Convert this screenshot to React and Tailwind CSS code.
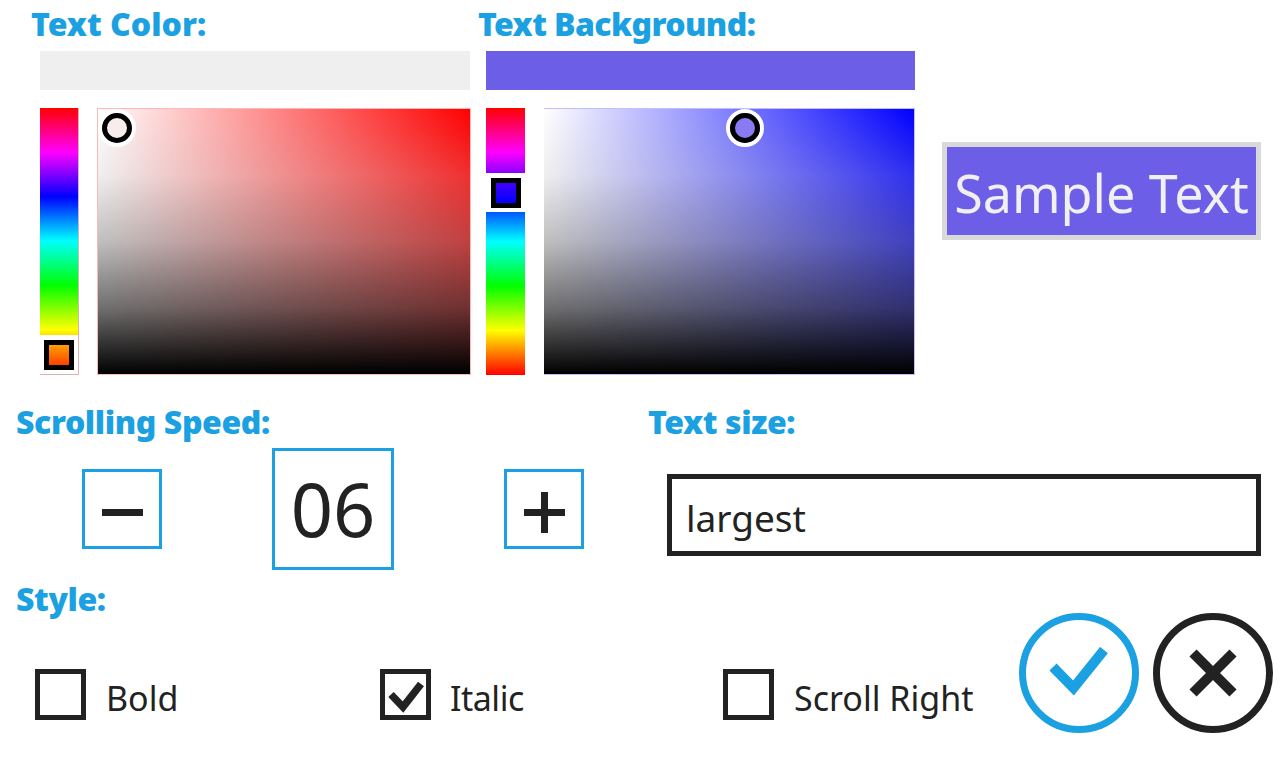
const HUE = "bg-[linear-gradient(to_bottom,#ff0000_0%,#ff00ff_16.67%,#0000ff_33.33%,#00ffff_50%,#00ff00_66.67%,#ffff00_83.33%,#ff0000_100%)]";

function Heading({ children, className = "tracking-[-0.4px]" }) {
  return <div className={`text-[#1ba1e2] text-[32px] leading-[38px] font-black whitespace-nowrap ${className}`}>{children}</div>;
}

function HueSlider({ className, top, inner }) {
  return (
    <div className={`relative w-[39px] h-[267px] ${HUE} ${className}`}>
      <div style={{ top }} className="absolute left-0 w-full h-[39px] bg-white flex items-center justify-center">
        <div className={`w-[30px] h-[30px] border-[5px] border-black ${inner}`} />
      </div>
    </div>
  );
}

function SatBox({ className, x, y, fill }) {
  return (
    <div className={`relative h-[267px] ${className}`}>
      <div style={{ left: x, top: y, background: fill }} className="absolute w-[38px] h-[38px] rounded-full border-[4px] border-white flex items-center justify-center">
        <div style={{ background: fill }} className="w-[30px] h-[30px] shrink-0 rounded-full border-[5px] border-black" />
      </div>
    </div>
  );
}

function SquareButton({ children, className = "" }) {
  return <div className={`border-[3px] border-[#1ba1e2] flex items-center justify-center text-[#222] bg-white ${className}`}>{children}</div>;
}

function Check({ checked, label, className = "", gap = "ml-[20px]" }) {
  return (
    <div className={`flex items-start ${className}`}>
      <div className="w-[51px] h-[51px] border-[5px] border-[#222] flex items-center justify-center">
        {checked && (
          <svg width="41" height="41" viewBox="0 0 41 41">
            <path d="M6 20.5 L18 33 L36 10" fill="none" stroke="#222" strokeWidth="7.5" />
          </svg>
        )}
      </div>
      <span className={`${gap} text-[34px] leading-[58px] text-[#222] font-normal`}>{label}</span>
    </div>
  );
}

export default function App() {
  return (
    <div className="w-[1280px] h-[768px] bg-white overflow-hidden flex flex-col font-['Noto_Sans','Open_Sans',sans-serif]">
      <div className="flex h-[403px] items-start">
        <div className="ml-[31px] w-[440px] pt-[5px]">
          <Heading className="tracking-[0px]">Text Color:</Heading>
          <div className="ml-[9px] mr-[1px] mt-[8px] h-[39px] bg-[#efefef]" />
          <div className="ml-[9px] mt-[18px] flex">
            <HueSlider className="border-r border-b border-[#e0b0b0]" top="227px" inner="bg-[linear-gradient(to_bottom,#ffa000,#ff4000)]" />
            <SatBox
              className="ml-[18px] w-[374px] border border-[#ffb8b8] bg-[linear-gradient(to_bottom,rgba(255,255,255,0),rgba(191,191,191,.25)_25%,rgba(128,128,128,.5)_50%,rgba(64,64,64,.75)_75%,#000),linear-gradient(to_right,#fff,#f00)]"
              x="0px" y="0px" fill="#f8eced"
            />
          </div>
        </div>
        <div className="ml-[7px] w-[437px] pt-[5px]">
          <Heading className="tracking-[-0.6px]">Text Background:</Heading>
          <div className="ml-[8px] mt-[8px] h-[39px] bg-[#6c5ee6]" />
          <div className="ml-[8px] mt-[18px] flex">
            <HueSlider className="" top="65px" inner="bg-[linear-gradient(to_bottom,#4000ff,#0000ff)]" />
            <SatBox
              className="ml-[19px] w-[371px] border-t border-b border-r border-[#c4bcff] bg-[linear-gradient(to_bottom,rgba(255,255,255,0),rgba(191,191,191,.25)_25%,rgba(128,128,128,.5)_50%,rgba(64,64,64,.75)_75%,#000),linear-gradient(to_right,#fff,#00f)]"
              x="182px" y="0px" fill="#8a7bf3"
            />
          </div>
        </div>
        <div className="ml-[27px] mt-[142px] w-[319px] h-[98px] border-[5px] border-[#d9d9d9] bg-[#6c5ee6] flex items-center justify-center pt-[4px]">
          <span className="text-[#f0f0f0] text-[52px] leading-none font-normal whitespace-nowrap">Sample Text</span>
        </div>
      </div>

      <div className="flex h-[177px] items-start">
        <div className="ml-[16px] w-[632px]">
          <Heading>Scrolling Speed:</Heading>
          <div className="flex items-center h-[121px] mt-[7px]">
            <SquareButton className="ml-[66px] w-[80px] h-[80px]">
              <svg className="mt-[7px]" width="41" height="7" viewBox="0 0 41 7"><rect width="41" height="7" fill="#222" /></svg>
            </SquareButton>
            <SquareButton className="ml-[110px] w-[122px] h-[122px] text-[74px] font-normal">06</SquareButton>
            <SquareButton className="ml-[110px] w-[80px] h-[80px]">
              <svg className="mt-[7px]" width="41" height="41" viewBox="0 0 41 41"><path d="M0 20.5 H41 M20.5 0 V41" stroke="#222" strokeWidth="7" fill="none" /></svg>
            </SquareButton>
          </div>
        </div>
        <div className="w-[613px]">
          <Heading>Text size:</Heading>
          <div className="ml-[19px] mt-[33px] h-[82px] w-[594px] border-[5px] border-[#222] flex items-center pl-[14px] pt-[6px] text-[37px] text-[#222] font-normal">largest</div>
        </div>
      </div>

      <div className="flex flex-1 items-start">
        <div className="ml-[16px] w-[1003px]">
          <Heading>Style:</Heading>
          <div className="flex mt-[51px] ml-[19px]">
            <Check label="Bold" className="w-[345px]" />
            <Check checked label="Italic" className="w-[343px]" gap="ml-[19px] tracking-[-0.5px]" />
            <Check label="Scroll Right" gap="ml-[20px]" />
          </div>
        </div>
        <div className="mt-[33px] flex gap-[14px]">
          <div className="w-[120px] h-[120px] rounded-full border-[7px] border-[#1ba1e2] flex items-center justify-center">
            <svg width="62" height="52" viewBox="0 0 62 52"><path d="M5 20 L25.5 41 L56 3" fill="none" stroke="#1ba1e2" strokeWidth="10" /></svg>
          </div>
          <div className="w-[120px] h-[120px] rounded-full border-[7px] border-[#222] flex items-center justify-center">
            <svg width="50" height="50" viewBox="0 0 50 50"><path d="M5 5 L45 45 M45 5 L5 45" fill="none" stroke="#222" strokeWidth="10" /></svg>
          </div>
        </div>
      </div>
    </div>
  );
}
